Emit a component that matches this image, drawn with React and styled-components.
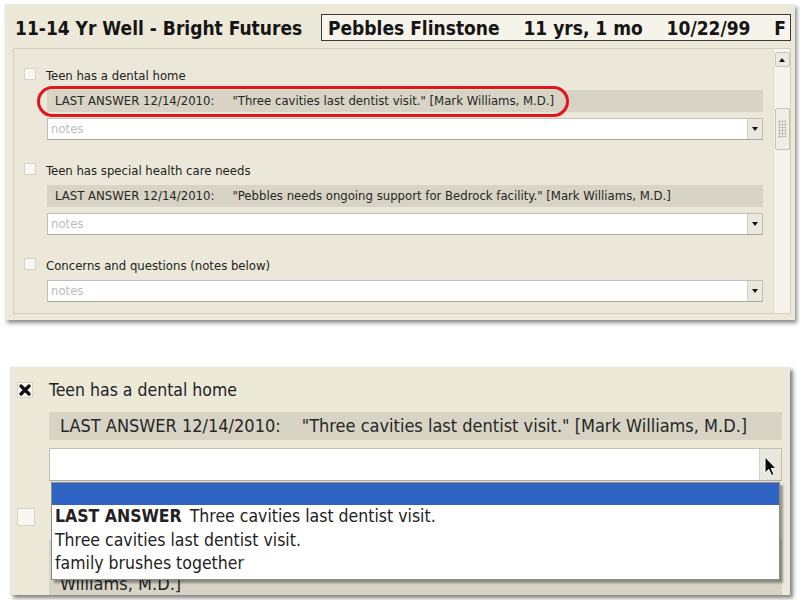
import React from "react";
import styled, { createGlobalStyle } from "styled-components";

const GlobalStyle = createGlobalStyle`
  html, body {
    margin: 0;
    padding: 0;
    background: #ffffff;
  }
  body {
    width: 800px;
    height: 600px;
    overflow: hidden;
    font-family: "DejaVu Sans Condensed", "Liberation Sans", sans-serif;
    color: #1e1e1e;
  }
`;

const Page = styled.div`
  width: 800px;
  height: 600px;
  box-sizing: border-box;
  padding: 4px 5px 0 5px;
  display: flex;
  flex-direction: column;
  gap: 47px;
`;

// top: the normal form view
const Window = styled.section`
  height: 316px;
  box-sizing: border-box;
  background: #ece9d8;
  box-shadow: 2px 3px 4px rgba(0, 0, 0, 0.45);
  padding: 10px 4px 6px 8px;
  display: flex;
  flex-direction: column;
  gap: 7px;
`;

const Header = styled.header`
  height: 27px;
  display: flex;
  align-items: center;
  justify-content: space-between;
`;

const Title = styled.h1`
  margin: 0 0 0 2px;
  font-size: 19px;
  font-weight: bold;
  color: #151515;
`;

const PatientBox = styled.div`
  width: 470px;
  height: 27px;
  box-sizing: border-box;
  border: 1px solid #3a3a3a;
  background: #f5f3ea;
  display: flex;
  align-items: center;
  justify-content: space-between;
  padding: 0 4px 0 6px;
  font-size: 19px;
  font-weight: bold;
  color: #151515;
`;

const InnerPanel = styled.div`
  flex: 1;
  display: flex;
  border: 1px solid #d3cfbf;
  background: #ebe8d9;
`;

const Content = styled.div`
  flex: 1;
  padding: 18px 10px 0 10px;
  display: flex;
  flex-direction: column;
  gap: ${(p) => p.$gap}px;
`;

const Item = styled.div`
  display: flex;
  flex-direction: column;
`;

const LabelRow = styled.label`
  height: ${(p) => p.$h}px;
  display: flex;
  align-items: center;
  gap: ${(p) => p.$gap}px;
  font-size: ${(p) => p.$size}px;
  color: #222;
`;

const Check = styled.span`
  flex: none;
  width: ${(p) => p.$size}px;
  height: ${(p) => p.$size}px;
  margin-top: ${(p) => p.$lift || 0}px;
  box-sizing: border-box;
  border: 1px solid #d5d2c6;
  background: #f8f7f2;
  display: flex;
  align-items: center;
  justify-content: center;
`;

const Bar = styled.div`
  position: relative;
  margin: ${(p) => p.$top}px 0 0 ${(p) => p.$indent}px;
  min-height: ${(p) => p.$h}px;
  box-sizing: border-box;
  background: #d7d4c5;
  padding: ${(p) => p.$pad};
  font-size: ${(p) => p.$size}px;
  line-height: ${(p) => p.$lh}px;
  color: #262626;
  white-space: nowrap;
`;

const Quote = styled.span`
  margin-left: ${(p) => p.$gap}px;
`;

// first line of a wrapped answer, cut short so nothing pokes out past the list
const FirstLine = styled.span`
  display: inline-block;
  max-width: 700px;
  overflow: hidden;
  vertical-align: top;
`;

const RedRing = styled.span`
  position: absolute;
  left: -10px;
  top: -4px;
  width: 532px;
  height: 31px;
  box-sizing: border-box;
  border: 3px solid #e2141c;
  border-radius: 16px;
  pointer-events: none;
`;

const Combo = styled.div`
  margin: ${(p) => p.$top}px 0 0 ${(p) => p.$indent}px;
  height: ${(p) => p.$h}px;
  box-sizing: border-box;
  border: 1px solid #c2bfb3;
  border-bottom-color: #a9a69b;
  background: #ffffff;
  display: flex;
`;

const Placeholder = styled.span`
  flex: 1;
  padding-left: 3px;
  font-size: 13px;
  line-height: 20px;
  color: #bdbdbd;
`;

const DropButton = styled.span`
  width: ${(p) => p.$w}px;
  box-sizing: border-box;
  background: #e9e7de;
  border-left: 1px solid #d4d1c6;
  display: flex;
  align-items: center;
  justify-content: center;
  &::after {
    content: "";
    display: ${(p) => (p.$arrow ? "block" : "none")};
    border-left: 3.5px solid transparent;
    border-right: 3.5px solid transparent;
    border-top: 4px solid #111;
  }
`;

const ScrollTrack = styled.div`
  width: 17px;
  background: #f4f2eb;
  border-left: 1px solid #e2dfd3;
  box-sizing: border-box;
  display: flex;
  flex-direction: column;
  align-items: center;
  padding-top: 3px;
`;

const ScrollButton = styled.span`
  width: 15px;
  height: 15px;
  box-sizing: border-box;
  border: 1px solid #c9c6ba;
  border-radius: 2px;
  background: #ece9df;
  display: flex;
  align-items: center;
  justify-content: center;
  &::after {
    content: "";
    border-left: 3.5px solid transparent;
    border-right: 3.5px solid transparent;
    border-bottom: 4px solid #111;
  }
`;

const ScrollThumb = styled.span`
  margin-top: 41px;
  width: 15px;
  height: 42px;
  box-sizing: border-box;
  border: 1px solid #c4c1b5;
  border-radius: 2px;
  background: #efede5;
  display: flex;
  align-items: center;
  justify-content: center;
  &::after {
    content: "";
    width: 8px;
    height: 18px;
    background-image: radial-gradient(#bdbab0 45%, transparent 55%);
    background-size: 3px 3px;
  }
`;

// bottom: zoomed in view with the open list
const ZoomWindow = styled.section`
  position: relative;
  margin-left: 5px;
  width: 780px;
  height: 228px;
  box-sizing: border-box;
  background: #ece9d8;
  box-shadow: 3px 3px 4px rgba(0, 0, 0, 0.5);
  padding: 15px 8px 0 7px;
  overflow: hidden;
  display: flex;
  flex-direction: column;
  gap: 27px;
`;

const List = styled.ul`
  position: absolute;
  left: 41px;
  top: 115px;
  width: 729px;
  height: 98px;
  box-sizing: border-box;
  margin: 0;
  padding: 0;
  list-style: none;
  background: #ffffff;
  border: 1px solid #8d8b84;
  box-shadow: 3px 3px 2px rgba(0, 0, 0, 0.35);
  font-size: 17.5px;
  color: #222;
`;

const Option = styled.li`
  height: ${(p) => (p.$selected ? 22 : 23.5)}px;
  line-height: 23.5px;
  padding-left: 3px;
  background: ${(p) => (p.$selected ? "#2f64c5" : "transparent")};
  white-space: nowrap;
`;

const Strong = styled.b`
  margin-right: 8px;
`;

const Cursor = styled.svg`
  position: absolute;
  left: 754px;
  top: 89px;
`;

function CrossMark() {
  return (
    <svg width="12" height="12" viewBox="0 0 12 12">
      <path d="M2 2 L10 10 M10 2 L2 10" stroke="#111" strokeWidth="3.2" strokeLinecap="round" />
    </svg>
  );
}

const items = [
  {
    label: "Teen has a dental home",
    last: "\"Three cavities last dentist visit.\" [Mark Williams, M.D.]",
    ring: true,
  },
  {
    label: "Teen has special health care needs",
    last: "\"Pebbles needs ongoing support for Bedrock facility.\" [Mark Williams, M.D.]",
  },
  { label: "Concerns and questions (notes below)" },
];

export default function App() {
  return (
    <>
      <GlobalStyle />
      <Page>
        <Window>
          <Header>
            <Title>11-14 Yr Well - Bright Futures</Title>
            <PatientBox>
              <span>Pebbles Flinstone</span>
              <span>11 yrs, 1 mo</span>
              <span>10/22/99</span>
              <span>F</span>
            </PatientBox>
          </Header>
          <InnerPanel>
            <Content $gap={22}>
              {items.map((it) => (
                <Item key={it.label}>
                  <LabelRow $h={16} $gap={10} $size={13}>
                    <Check $size={12} $lift={-3} />
                    {it.label}
                  </LabelRow>
                  {it.last && (
                    <Bar $top={7} $indent={23} $h={22} $pad="0 0 0 8px" $size={13} $lh={22}>
                      LAST ANSWER 12/14/2010:
                      <Quote $gap={18}>{it.last}</Quote>
                      {it.ring && <RedRing />}
                    </Bar>
                  )}
                  <Combo $top={it.last ? 6 : 7} $indent={23} $h={22}>
                    <Placeholder>notes</Placeholder>
                    <DropButton $w={15} $arrow />
                  </Combo>
                </Item>
              ))}
            </Content>
            <ScrollTrack>
              <ScrollButton />
              <ScrollThumb />
            </ScrollTrack>
          </InnerPanel>
        </Window>

        <ZoomWindow>
          <Item>
            <LabelRow $h={16} $gap={16} $size={17.5}>
              <Check $size={16}>
                <CrossMark />
              </Check>
              Teen has a dental home
            </LabelRow>
            <Bar $top={14} $indent={32} $h={28} $pad="0 0 0 11px" $size={18} $lh={28}>
              LAST ANSWER 12/14/2010:
              <Quote $gap={21}>"Three cavities last dentist visit." [Mark Williams, M.D.]</Quote>
            </Bar>
            <Combo $top={8} $indent={32} $h={33}>
              <Placeholder />
              <DropButton $w={22} />
            </Combo>
          </Item>
          <Item>
            <LabelRow $h={18} $gap={16} $size={17.5}>
              <Check $size={18} />
              Teen has special health care needs
            </LabelRow>
            <Bar $top={14} $indent={32} $h={28} $pad="8px 0 4px 11px" $size={18} $lh={24}>
              <FirstLine>
                LAST ANSWER 12/14/2010:
                <Quote $gap={21}>"Pebbles needs ongoing support for Bedrock facility." [Mark</Quote>
              </FirstLine>
              <br />
              Williams, M.D.]
            </Bar>
          </Item>

          <List>
            <Option $selected />
            <Option>
              <Strong>LAST ANSWER</Strong>Three cavities last dentist visit.
            </Option>
            <Option>Three cavities last dentist visit.</Option>
            <Option>family brushes together</Option>
          </List>

          <Cursor width="13" height="21" viewBox="0 0 13 21">
            <path
              d="M1 1 L1 17 L4.8 13.4 L7.6 19.6 L10 18.5 L7.3 12.4 L12 12.4 Z"
              fill="#0a0a0a"
              stroke="#ffffff"
              strokeWidth="1"
              strokeLinejoin="round"
            />
          </Cursor>
        </ZoomWindow>
      </Page>
    </>
  );
}
